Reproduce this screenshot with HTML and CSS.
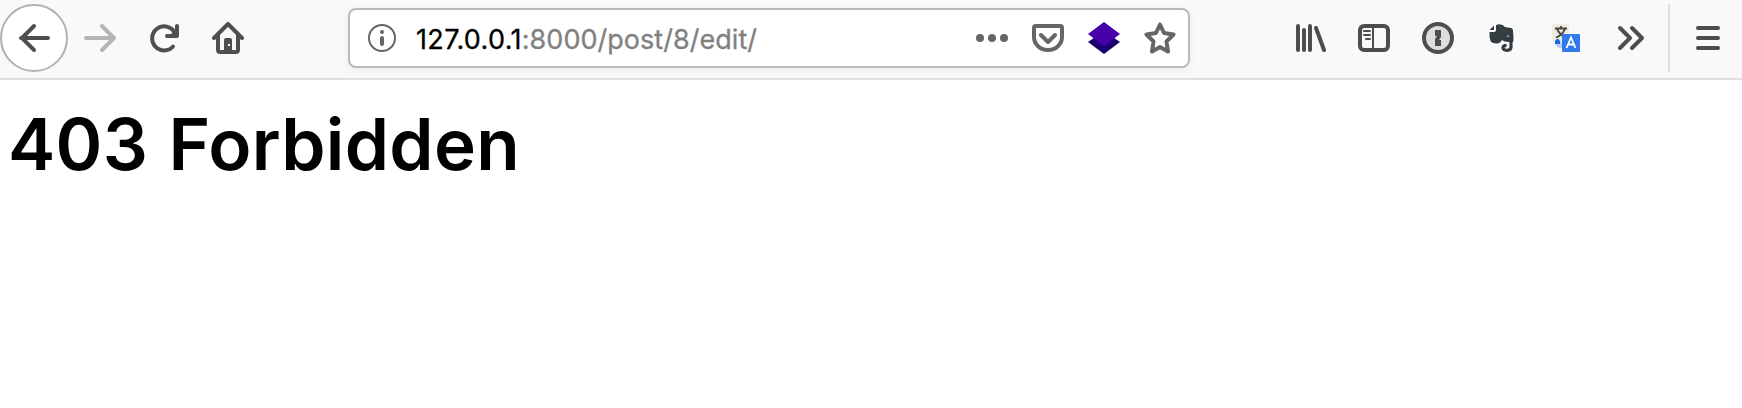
FILE: index.html
```html
<!DOCTYPE html>
<html lang="en">
<head>
<meta charset="utf-8">
<title>403 Forbidden</title>
<link rel="stylesheet" href="styles.css">
</head>
<body>
<header class="toolbar">
  <nav class="nav">
    <button class="back" aria-label="Back"><svg class="icon" viewBox="0 0 32 32"><path class="line" d="M30 16H3M16 4 4 16l12 12" /></svg></button>
    <svg class="icon forward" viewBox="0 0 32 32"><path class="line" d="M2 16h27M18 4l12 12-12 12"/></svg>
    <svg class="icon reload" viewBox="0 0 32 32"><path class="line" d="M25 24.500A12 12 0 1 1 26 9.500M29 4v10H19"/><path d="M21 14l8-8v8z"/></svg>
    <svg class="icon home" viewBox="0 0 32 32"><path class="line" d="M2 16 16 2l14 14M6 14v14q0 2 2 2h16q2 0 2-2V14"/><path fill-rule="evenodd" d="M12 30V18q0-2 2-2h4q2 0 2 2v12zM16 22v2h2v-2z"/></svg>
  </nav>
  <div class="urlbar">
    <svg class="icon info" viewBox="0 0 32 32"><circle class="thin" cx="16" cy="16" r="13"/><circle cx="16" cy="10" r="2"/><path class="line" d="M16 16v6"/></svg>
    <div class="url"><span class="host">127.0.0.1</span>:8000/post/8/edit/</div>
    <div class="actions">
      <svg class="icon" viewBox="0 0 32 32"><circle cx="4" cy="16" r="4"/><circle cx="16" cy="16" r="4"/><circle cx="28" cy="16" r="4"/></svg>
      <svg class="icon" viewBox="0 0 32 32"><path class="line" d="M4 4h24q2 0 2 2v9a14 13 0 0 1-28 0V6q0-2 2-2zM9 13l7 7 7-7"/></svg>
      <svg class="icon" viewBox="0 0 32 32"><path fill="#1c0073" d="M0 20 16 9l16 11-16 12z"/><path fill="#4600aa" d="M16 0 32 12 16 24 0 12z"/></svg>
      <svg class="icon" viewBox="0 0 32 32"><path class="line" d="M16 2.500l4 8.500 9.500 1.500-7 7 1.500 10-8-4.500-8 4.500 1.500-10-7-7L12 11z"/></svg>
    </div>
  </div>
  <div class="tools">
    <svg class="icon" viewBox="0 0 32 32"><path class="line" d="M4 4v24M10 8v20M16 4v24M22 6l8 22"/></svg>
    <svg class="icon" viewBox="0 0 32 32"><rect class="line" x="2" y="4" width="28" height="24" rx="4"/><path class="thin" d="M15 4v24M6 9h6M6 13h6M8 17h4"/></svg>
    <svg class="icon" viewBox="0 0 32 32"><circle cx="16" cy="16" r="14" fill="#ddd" stroke="#4d4d4d" stroke-width="4"/><path d="M13 8h6v7l-2 3h2v6h-6v-7l2-3h-2z"/></svg>
    <svg class="icon" viewBox="0 0 32 32"><path class="trunk-edge" d="M25 17v8q0 3.300-4 3.300t-4-2.500 3.500-2.500"/><path class="elephant" d="M10 3q6-2 9 2l6 1q2 0 2 3 .800 6 .300 11h-4.500l-4.300-.500-2.500-1.500q-2 4-5.500 3.500-5-.500-6-2.500-1.500-4-1-9H8q2 0 2-2zM8 3.500V8H3.500z"/><path class="trunk" d="M25 17v8q0 3.300-4 3.300t-4-2.500 3.500-2.500"/><path d="M20.500 14.500q1.500-2 3 0z" fill="#fff"/></svg>
    <svg class="icon" viewBox="0 0 32 32"><rect x="2" y="2" width="17" height="17" rx="1" fill="#eeece1"/><path d="M5 6.500h12M11 4v2.500M15 6.500q-2 6.500-9 9M7 7q3 6 8 8" fill="none" stroke="#444" stroke-width="1.800"/><path d="M5 20q0-4 4-3l4 5v4H9q-4-2-4-6z" fill="#b8cff7"/><path d="M5 22v-3l2.500-2.500L10 19v3z" fill="#1769dc"/><rect x="12" y="12" width="18" height="18" rx="1" fill="#3478ee"/><path d="M16.500 26l4.500-10.500L25.500 26M18 22.500h6" fill="none" stroke="#fff" stroke-width="1.800"/></svg>
    <svg class="icon" viewBox="0 0 32 32"><path class="line" d="M6 6l10 10L6 26M18 6l10 10-10 10"/></svg>
  </div>
  <div class="menu"><svg class="icon" viewBox="0 0 32 32"><path class="line" d="M6 6h20M6 16h20M6 26h20"/></svg></div>
</header>
<main><h1 class="message">403 Forbidden</h1></main>
</body>
</html>
```
FILE: styles.css
```css
body { margin: 0; background: #fff; color: #000; font-family: Inter, sans-serif; }
.toolbar { box-sizing: border-box; display: flex; align-items: center; height: 80px; padding-bottom: 2px; background: #f9f9f9; border-bottom: 2px solid #e0e0e0; }
.icon { display: block; flex: none; width: 32px; height: 32px; fill: currentColor; }
.line, .thin { fill: none; stroke: currentColor; stroke-width: 4; stroke-linecap: round; stroke-linejoin: round; }
.thin { stroke-width: 2; }
.nav { display: flex; align-items: center; width: 348px; color: #4f4f50; }
.back { box-sizing: border-box; display: grid; place-items: center; width: 68px; height: 68px; padding: 0; border: 2px solid #b1b1b1; border-radius: 50%; background: #fff; color: inherit; }
.forward { margin-left: 16px; color: #b5b5b5; }
.reload { margin-left: 32px; }
.home { margin-left: 32px; }
.urlbar { box-sizing: border-box; display: flex; align-items: center; width: 842px; height: 60px; padding: 0 12px 0 16px; border: 2px solid #bababa; border-radius: 8px; background: #fff; box-shadow: 0 2px 8px rgba(0,0,0,.06); color: #666; }
.url { margin-left: 18px; padding-top: 3px; font-size: 27px; line-height: 32px; letter-spacing: .03px; color: #808080; white-space: nowrap; -webkit-text-stroke: .3px; }
.host { color: #000; letter-spacing: .35px; }
.actions { display: flex; gap: 24px; margin-left: auto; }
.tools { display: flex; gap: 32px; margin-left: 104px; color: #4d4d4d; }
.elephant { fill: #343e42; stroke: #fff; stroke-width: 2; paint-order: stroke; }
.trunk, .trunk-edge { fill: none; stroke: #343e42; stroke-width: 3.2; }
.trunk-edge { stroke: #fff; stroke-width: 5.5; }
.menu { box-sizing: border-box; display: flex; align-items: center; height: 68px; margin-left: auto; padding: 0 18px 0 22px; border-left: 2px solid #ddd; color: #4d4d4d; }
.message { margin: 24px 0 0 8px; font-size: 71px; line-height: 80px; font-weight: 600; letter-spacing: .3px; word-spacing: 2px; }
```
